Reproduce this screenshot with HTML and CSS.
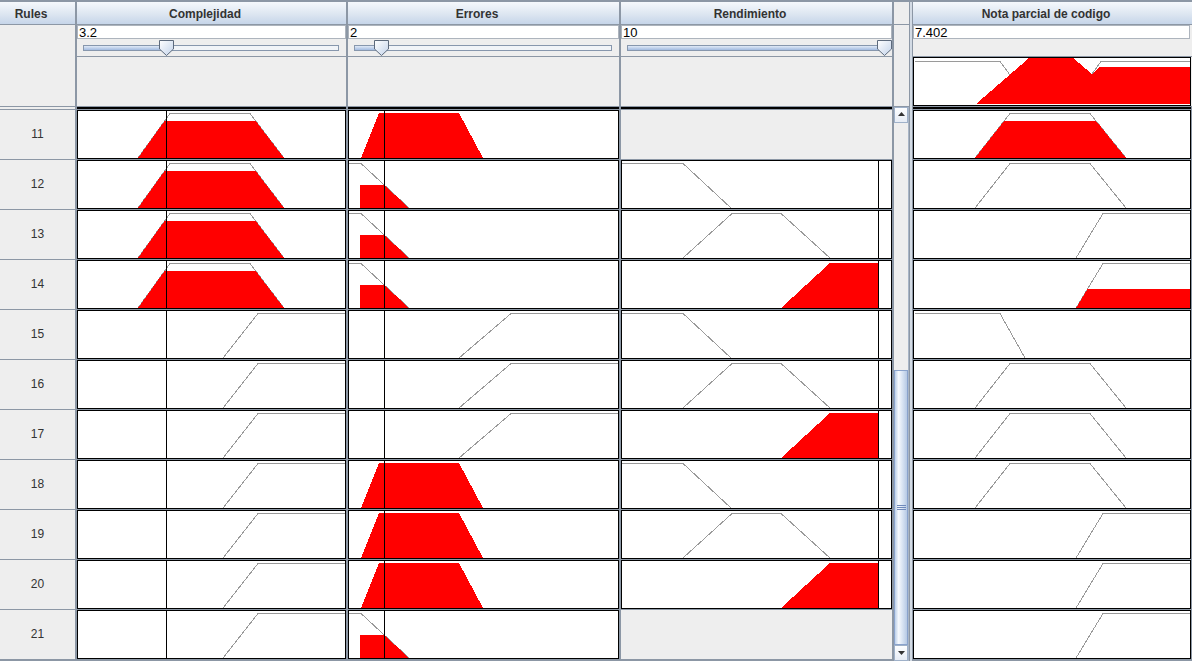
FILE: index.html
```html
<!DOCTYPE html>
<html lang="es">
<head>
<meta charset="utf-8">
<title>Rule viewer</title>
<link rel="stylesheet" href="styles.css">
</head>
<body>
<svg class="defs" aria-hidden="true">
  <defs>
    <linearGradient id="thumbg" x1="0" y1="0" x2="1" y2="1">
      <stop offset="0" stop-color="#ffffff"/>
      <stop offset="1" stop-color="#c3d3ea"/>
    </linearGradient>
    <g id="c-line"><path d="M88.5 0V47" stroke="#000"/></g>
    <g id="c-med"><path d="M60 47L92 2.5H172L206 47" fill="none" stroke="#9a9a9a"/></g>
    <g id="c-med-red"><use href="#c-med"/><path d="M60 47L86.6 10H177.7L206 47Z" fill="#f00"/></g>
    <g id="c-high"><path d="M145 47L180 2.5H267" fill="none" stroke="#9a9a9a"/></g>

    <g id="e-line"><path d="M35.5 0V47" stroke="#000"/></g>
    <g id="e-low"><path d="M0 2.5H12L60 47" fill="none" stroke="#9a9a9a"/></g>
    <g id="e-low-red"><use href="#e-low"/><path d="M11 24H35.2L60 47H11Z" fill="#f00"/></g>
    <g id="e-med-red"><path d="M12 47L30 2H110L134 47Z" fill="#f00"/></g>
    <g id="e-high"><path d="M110 47L162 2.5H269" fill="none" stroke="#9a9a9a"/></g>

    <g id="r-line"><path d="M256.5 0V47" stroke="#000"/></g>
    <g id="r-low"><path d="M0 2.5H61L109 47" fill="none" stroke="#9a9a9a"/></g>
    <g id="r-med"><path d="M61 47L110 2.5H159L208 47" fill="none" stroke="#9a9a9a"/></g>
    <g id="r-high-red"><path d="M159 47L208 2H256V47Z" fill="#f00"/></g>

    <g id="n-med"><path d="M61 47L96 2.5H176L212 47" fill="none" stroke="#9a9a9a"/></g>
    <g id="n-med-red"><use href="#n-med"/><path d="M61 47L90.1 10H182.1L212 47Z" fill="#f00"/></g>
    <g id="n-high"><path d="M162 47L189 2.5H276" fill="none" stroke="#9a9a9a"/></g>
    <g id="n-high-red"><use href="#n-high"/><path d="M162 47L173.5 28H276V47Z" fill="#f00"/></g>
    <g id="n-low"><path d="M1 2.5H86L111 47" fill="none" stroke="#9a9a9a"/></g>

    <g id="thumb"><path d="M0.5 0.5H14.5V9L7.5 15.5L0.5 9Z" fill="url(#thumbg)" stroke="#5d6a7c"/></g>
  </defs>
</svg>

<div class="app">
  <div class="left">
    <div class="lgrid head">
      <div class="hcell">Rules</div>
      <div class="hcell">Complejidad</div>
      <div class="hcell">Errores</div>
      <div class="hcell">Rendimiento</div>
      <div class="blank"></div>
    </div>

    <div class="lgrid inputs">
      <div class="blank"></div>
      <div class="input-cell">
        <div class="field">3.2</div>
        <div class="slider">
          <div class="track">
            <div class="fill" style="width:32.3%"></div>
            <svg class="thumb" style="left:calc(32.3% - 7.5px)" width="15" height="16"><use href="#thumb"/></svg>
          </div>
        </div>
      </div>
      <div class="input-cell">
        <div class="field">2</div>
        <div class="slider">
          <div class="track">
            <div class="fill" style="width:10.2%"></div>
            <svg class="thumb" style="left:calc(10.2% - 7.5px)" width="15" height="16"><use href="#thumb"/></svg>
          </div>
        </div>
      </div>
      <div class="input-cell">
        <div class="field">10</div>
        <div class="slider">
          <div class="track">
            <div class="fill" style="width:100%"></div>
            <svg class="thumb" style="left:calc(100% - 7.5px)" width="15" height="16"><use href="#thumb"/></svg>
          </div>
        </div>
      </div>
      <div class="blank"></div>
    </div>

    <div class="lbody">
      <div class="rows">
        <div class="edge blank"></div><div class="edge"></div><div class="edge"></div><div class="edge"></div>

        <div class="num">11</div>
        <div class="box"><svg class="plot"><use href="#c-med-red"/><use href="#c-line"/></svg></div>
        <div class="box"><svg class="plot"><use href="#e-med-red"/><use href="#e-line"/></svg></div>
        <div class="empty"></div>

        <div class="num">12</div>
        <div class="box"><svg class="plot"><use href="#c-med-red"/><use href="#c-line"/></svg></div>
        <div class="box"><svg class="plot"><use href="#e-low-red"/><use href="#e-line"/></svg></div>
        <div class="box"><svg class="plot"><use href="#r-low"/><use href="#r-line"/></svg></div>

        <div class="num">13</div>
        <div class="box"><svg class="plot"><use href="#c-med-red"/><use href="#c-line"/></svg></div>
        <div class="box"><svg class="plot"><use href="#e-low-red"/><use href="#e-line"/></svg></div>
        <div class="box"><svg class="plot"><use href="#r-med"/><use href="#r-line"/></svg></div>

        <div class="num">14</div>
        <div class="box"><svg class="plot"><use href="#c-med-red"/><use href="#c-line"/></svg></div>
        <div class="box"><svg class="plot"><use href="#e-low-red"/><use href="#e-line"/></svg></div>
        <div class="box"><svg class="plot"><use href="#r-high-red"/><use href="#r-line"/></svg></div>

        <div class="num">15</div>
        <div class="box"><svg class="plot"><use href="#c-high"/><use href="#c-line"/></svg></div>
        <div class="box"><svg class="plot"><use href="#e-high"/><use href="#e-line"/></svg></div>
        <div class="box"><svg class="plot"><use href="#r-low"/><use href="#r-line"/></svg></div>

        <div class="num">16</div>
        <div class="box"><svg class="plot"><use href="#c-high"/><use href="#c-line"/></svg></div>
        <div class="box"><svg class="plot"><use href="#e-high"/><use href="#e-line"/></svg></div>
        <div class="box"><svg class="plot"><use href="#r-med"/><use href="#r-line"/></svg></div>

        <div class="num">17</div>
        <div class="box"><svg class="plot"><use href="#c-high"/><use href="#c-line"/></svg></div>
        <div class="box"><svg class="plot"><use href="#e-high"/><use href="#e-line"/></svg></div>
        <div class="box"><svg class="plot"><use href="#r-high-red"/><use href="#r-line"/></svg></div>

        <div class="num">18</div>
        <div class="box"><svg class="plot"><use href="#c-high"/><use href="#c-line"/></svg></div>
        <div class="box"><svg class="plot"><use href="#e-med-red"/><use href="#e-line"/></svg></div>
        <div class="box"><svg class="plot"><use href="#r-low"/><use href="#r-line"/></svg></div>

        <div class="num">19</div>
        <div class="box"><svg class="plot"><use href="#c-high"/><use href="#c-line"/></svg></div>
        <div class="box"><svg class="plot"><use href="#e-med-red"/><use href="#e-line"/></svg></div>
        <div class="box"><svg class="plot"><use href="#r-med"/><use href="#r-line"/></svg></div>

        <div class="num">20</div>
        <div class="box"><svg class="plot"><use href="#c-high"/><use href="#c-line"/></svg></div>
        <div class="box"><svg class="plot"><use href="#e-med-red"/><use href="#e-line"/></svg></div>
        <div class="box"><svg class="plot"><use href="#r-high-red"/><use href="#r-line"/></svg></div>

        <div class="num">21</div>
        <div class="box"><svg class="plot"><use href="#c-high"/><use href="#c-line"/></svg></div>
        <div class="box"><svg class="plot"><use href="#e-low-red"/><use href="#e-line"/></svg></div>
        <div class="empty"></div>
      </div>

      <div class="scroll">
        <div class="sbtn up"><svg width="7" height="4"><path d="M0 4L3.5 0L7 4Z" fill="#333"/></svg></div>
        <div class="strack"></div>
        <div class="sthumb"><span class="grip"></span><span class="grip"></span><span class="grip"></span></div>
        <div class="sbtn down"><svg width="7" height="4"><path d="M0 0L7 0L3.5 4Z" fill="#333"/></svg></div>
      </div>
    </div>
  </div>

  <div class="divider"></div>

  <div class="right">
    <div class="hcell rhead">Nota parcial de codigo</div>
    <div class="rinputs">
      <div class="field">7.402</div>
      <div class="rgap"></div>
      <div class="box agg">
        <svg class="plot">
          <path d="M1 3.5H86L96 17" fill="none" stroke="#9a9a9a"/>
          <path d="M62 46L115 0H159L178 16L186 9H276V46Z" fill="#f00"/>
          <path d="M178 16L187 3.5H276" fill="none" stroke="#9a9a9a"/>
        </svg>
      </div>
    </div>
    <div class="rrows">
      <div class="edge"></div>
      <div class="box"><svg class="plot"><use href="#n-med-red"/></svg></div>
      <div class="box"><svg class="plot"><use href="#n-med"/></svg></div>
      <div class="box"><svg class="plot"><use href="#n-high"/></svg></div>
      <div class="box"><svg class="plot"><use href="#n-high-red"/></svg></div>
      <div class="box"><svg class="plot"><use href="#n-low"/></svg></div>
      <div class="box"><svg class="plot"><use href="#n-med"/></svg></div>
      <div class="box"><svg class="plot"><use href="#n-med"/></svg></div>
      <div class="box"><svg class="plot"><use href="#n-med"/></svg></div>
      <div class="box"><svg class="plot"><use href="#n-high"/></svg></div>
      <div class="box"><svg class="plot"><use href="#n-high"/></svg></div>
      <div class="box"><svg class="plot"><use href="#n-high"/></svg></div>
    </div>
  </div>
</div>
</body>
</html>
```

FILE: styles.css
```css
html, body {
  margin: 0;
  padding: 0;
}

body {
  background: #eeeeee;
  font-family: "Liberation Sans", Arial, sans-serif;
  overflow: hidden;
}

.defs {
  display: block;
  width: 0;
  height: 0;
  overflow: hidden;
}

.app {
  display: flex;
  height: 661px;
  box-sizing: border-box;
  padding-top: 2px;
  background: #8c97a5;
}

/* ---------- left panel ---------- */
.left {
  width: 909px;
  display: flex;
  flex-direction: column;
  gap: 1px;
}

.lgrid {
  display: grid;
  grid-template-columns: 75px 269px 271px 271px 15px;
  column-gap: 2px;
}

.head {
  height: 22px;
}

.hcell {
  background: linear-gradient(#f5f8fc, #dde6f1 55%, #c6d5e9);
  font-weight: bold;
  font-size: 12px;
  color: #333;
  text-align: center;
  padding: 3px 13px 0 0;
  line-height: 19px;
  box-sizing: border-box;
  white-space: nowrap;
  overflow: hidden;
}

.blank {
  background: #eeeeee;
}

.inputs {
  height: 81px;
}

.input-cell {
  background: #eeeeee;
  display: flex;
  flex-direction: column;
}

.field {
  height: 14px;
  box-sizing: border-box;
  background: #ffffff;
  border: 1px solid #adb4bd;
  font-size: 13px;
  line-height: 14px;
  padding-left: 1px;
  color: #000;
  white-space: nowrap;
  overflow: hidden;
}

.slider {
  height: 18px;
  box-sizing: border-box;
  padding: 6px 7px 0 6px;
  border-bottom: 1px solid #8c97a5;
}

.track {
  position: relative;
  height: 6px;
  box-sizing: border-box;
  border: 1px solid #8797ad;
  background: #f1f4f8;
}

.fill {
  height: 100%;
  background: linear-gradient(#e0e9f6, #a3bbe0);
}

.thumb {
  position: absolute;
  top: -6px;
  display: block;
}

.lbody {
  flex: 1;
  display: flex;
  gap: 2px;
  min-height: 0;
}

.rows {
  display: grid;
  grid-template-columns: 75px 269px 271px 271px;
  grid-template-rows: 2px repeat(11, 49px);
  gap: 1px 2px;
  align-content: start;
}

.edge {
  background: #000;
}

.edge.blank {
  background: #eeeeee;
}

.num {
  background: #eeeeee;
  font-size: 12px;
  color: #333;
  text-align: center;
  line-height: 49px;
}

.box {
  background: #ffffff;
  border: 1px solid #000;
}

.empty {
  background: #eeeeee;
}

.plot {
  display: block;
  width: 100%;
  height: 100%;
  shape-rendering: crispEdges;
}

/* ---------- scrollbar ---------- */
.scroll {
  width: 15px;
  display: flex;
  flex-direction: column;
  background: #eeeeee;
  box-sizing: border-box;
  border-right: 1px solid #a8b5c6;
}

.sbtn {
  height: 16px;
  flex: none;
  display: flex;
  align-items: center;
  justify-content: center;
  box-sizing: border-box;
  background: linear-gradient(#fdfeff, #e6ecf5);
  border: 1px solid #9fb1c9;
}

.sbtn.up svg {
  margin-bottom: 2px;
}

.strack {
  flex: 1;
}

.sthumb {
  height: 275px;
  flex: none;
  box-sizing: border-box;
  background: linear-gradient(to right, #bccfe9, #f6f9fd 30%, #d6e2f2 65%, #b6c9e4);
  border: 1px solid #8aa3cc;
  display: flex;
  flex-direction: column;
  align-items: center;
  justify-content: center;
  gap: 1px;
}

.grip {
  display: block;
  width: 9px;
  height: 1px;
  background: #6f89bb;
}

/* ---------- divider ---------- */
.divider {
  width: 4px;
  box-sizing: border-box;
  border-left: 1px solid #8c97a5;
  border-right: 1px solid #8c97a5;
  background: #d3dbe5;
}

/* ---------- right panel ---------- */
.right {
  width: 279px;
  display: flex;
  flex-direction: column;
  gap: 1px;
}

.rhead {
  height: 22px;
  flex: none;
}

.rinputs {
  height: 81px;
  flex: none;
  background: #eeeeee;
  display: flex;
  flex-direction: column;
}

.rinputs .field {
  margin-right: 2px;
}

.rgap {
  height: 18px;
  box-sizing: border-box;
  border-bottom: 1px solid #8c97a5;
}

.agg {
  height: 49px;
  box-sizing: border-box;
  margin-right: 1px;
}

.rrows {
  display: grid;
  grid-template-columns: 278px;
  grid-template-rows: 2px repeat(11, 49px);
  row-gap: 1px;
  align-content: start;
}
```
